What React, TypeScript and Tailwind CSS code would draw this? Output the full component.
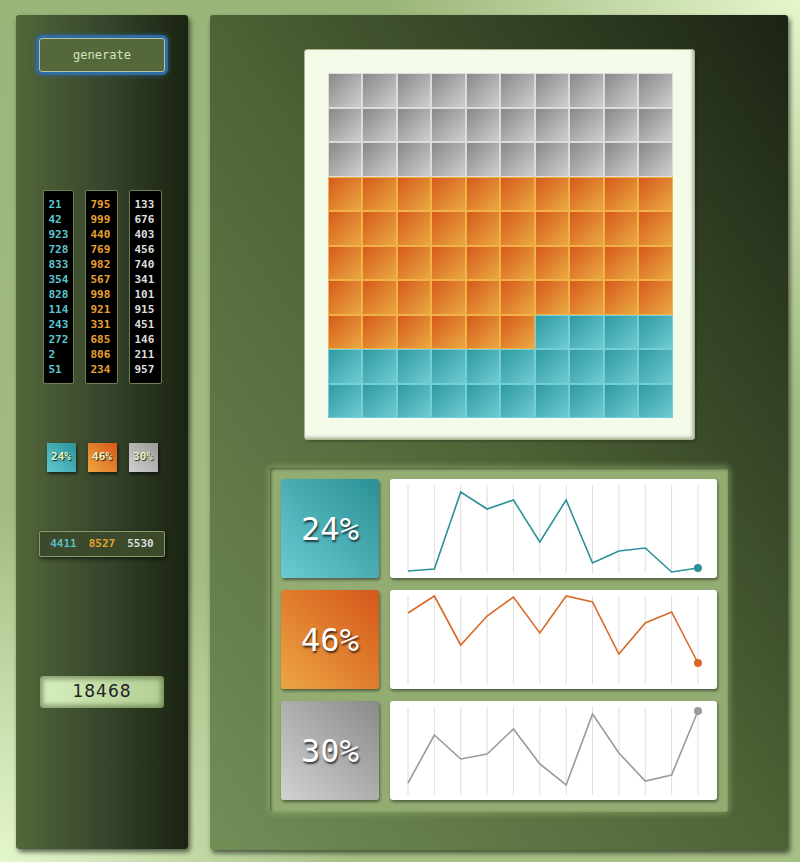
import React from "react";

const col1 = [21, 42, 923, 728, 833, 354, 828, 114, 243, 272, 2, 51];
const col2 = [795, 999, 440, 769, 982, 567, 998, 921, 331, 685, 806, 234];
const col3 = [133, 676, 403, 456, 740, 341, 101, 915, 451, 146, 211, 957];

const charts = [
  {
    pct: "24%",
    tile: "bg-[linear-gradient(to_bottom_left,#2a8f96,#6ccbd2)]",
    stroke: "#2b9199",
    ys: [92, 90, 13, 30, 21, 63, 21, 84, 72, 69, 93, 89],
  },
  {
    pct: "46%",
    tile: "bg-[linear-gradient(to_bottom_left,#d5561a,#eca543)]",
    stroke: "#d9692a",
    ys: [23, 6, 55, 26, 7, 43, 6, 12, 64, 33, 22, 73],
  },
  {
    pct: "30%",
    tile: "bg-[linear-gradient(to_bottom_left,#8a8a8a,#d2d2d2)]",
    stroke: "#9a9a9a",
    ys: [82, 34, 58, 53, 28, 63, 84, 13, 52, 80, 74, 10],
  },
];

const mono = "font-['DejaVu_Sans_Mono',monospace]";

function Cell({ kind }: { kind: "gray" | "orange" | "teal" }) {
  const cls =
    kind === "gray"
      ? "bg-[linear-gradient(to_bottom_right,#888888,#cfcfcf)] border-[#dcdcdc]"
      : kind === "orange"
      ? "bg-[linear-gradient(to_bottom_right,#d65a1c,#eaa942)] border-[#f2b246]"
      : "bg-[linear-gradient(to_bottom_right,#2f9aa2,#6fcbd3)] border-[#74d0d6]";
  return <div className={`border ${cls}`} />;
}

function Chart({ ys, stroke }: { ys: number[]; stroke: string }) {
  const xs = ys.map((_, i) => 18 + i * 26.36);
  const pts = ys.map((y, i) => `${xs[i]},${y}`).join(" ");
  const last = ys.length - 1;
  return (
    <div className="w-[327px] h-[99px] bg-white rounded-[3px] shadow-[1px_2px_3px_rgba(0,0,0,0.45)]">
      <svg width="327" height="99">
        {xs.map((x, i) => (
          <line key={i} x1={x} y1={6} x2={x} y2={94} stroke="#dddddd" strokeWidth={1} />
        ))}
        <polyline points={pts} fill="none" stroke={stroke} strokeWidth={1.6} />
        <circle cx={xs[last]} cy={ys[last]} r={4} fill={stroke} />
      </svg>
    </div>
  );
}

export default function App() {
  const cells: ("gray" | "orange" | "teal")[] = [];
  for (let i = 0; i < 100; i++) {
    cells.push(i < 30 ? "gray" : i < 76 ? "orange" : "teal");
  }

  return (
    <div className="w-[800px] h-[862px] overflow-hidden flex gap-[22px] pl-4 pt-[15px] bg-[radial-gradient(circle_at_100%_0%,#e6f6cc_0%,transparent_35%),radial-gradient(circle_at_0%_100%,#e4f6cc_0%,transparent_30%),linear-gradient(to_bottom,#9ab579,#a6bf85)]">
      {/* sidebar */}
      <div className="w-[172px] h-[834px] rounded-[3px] flex flex-col items-center bg-[linear-gradient(to_right,#53673a,#34432a_55%,#1a2210)] shadow-[2px_3px_5px_rgba(0,0,0,0.6)]">
        <button className={`mt-[23px] w-[126px] h-[34px] rounded-[3px] border border-[#b8c2a8] bg-[#54683b] text-[#d4e4bc] text-[12px] ${mono} shadow-[0_0_0_3px_#2f6ca4,0_0_4px_4px_rgba(47,108,164,0.5)]`}>
          generate
        </button>

        <div className={`mt-[118px] flex gap-[11px] ${mono} text-[11px] font-bold leading-[15px]`}>
          {[
            { d: col1, c: "text-[#5cc6cf]", w: "w-[31px]" },
            { d: col2, c: "text-[#e9a131]", w: "w-[33px]" },
            { d: col3, c: "text-[#dedede]", w: "w-[33px]" },
          ].map((c, i) => (
            <div key={i} className={`${c.w} h-[194px] bg-black border border-[#6e8052] rounded-[2px] pt-[6px] pl-[5px] ${c.c}`}>
              {c.d.map((n, j) => (
                <div key={j}>{n}</div>
              ))}
            </div>
          ))}
        </div>

        <div className={`mt-[59px] flex gap-[12px] ${mono} text-[11px] font-bold text-[#e4f4c4] [text-shadow:1px_1px_1px_rgba(0,0,0,0.8)]`}>
          <div className="w-[29px] h-[29px] flex items-center justify-center bg-[linear-gradient(to_bottom_left,#2c9199,#62c8d0)] shadow-[1px_2px_3px_rgba(0,0,0,0.6)]">24%</div>
          <div className="w-[29px] h-[29px] flex items-center justify-center bg-[linear-gradient(to_bottom_left,#d6581a,#eea640)] shadow-[1px_2px_3px_rgba(0,0,0,0.6)]">46%</div>
          <div className="w-[29px] h-[29px] flex items-center justify-center bg-[linear-gradient(to_bottom_left,#9a9a9a,#d0d0d0)] shadow-[1px_2px_3px_rgba(0,0,0,0.6)]">30%</div>
        </div>

        <div className={`mt-[59px] w-[126px] h-[26px] flex items-center justify-center gap-[12px] border border-[#8a9c6c] rounded-[2px] bg-[#3b4a2a] shadow-[1px_2px_4px_rgba(0,0,0,0.6)] ${mono} text-[11px] font-bold`}>
          <span className="text-[#5cbcc6]">4411</span>
          <span className="text-[#e2a232]">8527</span>
          <span className="text-[#dcdcdc]">5530</span>
        </div>

        <div className="mt-[119px] w-[124px] h-[32px] rounded-[4px] flex items-center justify-center bg-[linear-gradient(to_right,#d6efbe,#b2cd92)] shadow-[inset_0_0_5px_3px_rgba(70,90,45,0.55)] text-[17px] tracking-[1px] text-[#222] font-['DejaVu_Sans',sans-serif]">
          18468
        </div>
      </div>

      {/* main panel */}
      <div className="w-[578px] h-[835px] rounded-[3px] flex flex-col items-center bg-[linear-gradient(to_top_right,#728e57,#4d6236_50%,#1b2313)] shadow-[2px_3px_5px_rgba(0,0,0,0.6)]">
        <div className="mt-[34px] w-[391px] h-[391px] p-[23px] rounded-[3px] border border-[#a6b888] bg-[#f4fce9] shadow-[inset_-2px_-2px_3px_rgba(0,0,0,0.25),2px_2px_2px_rgba(0,0,0,0.2)]">
          <div className="w-[345px] h-[345px] grid grid-cols-10 grid-rows-10">
            {cells.map((k, i) => (
              <Cell key={i} kind={k} />
            ))}
          </div>
        </div>

        <div className="mt-[28px] w-[458px] h-[344px] p-[11px] flex flex-col gap-[12px] rounded-[3px] bg-[#92ac72] shadow-[inset_1px_1px_3px_rgba(0,0,0,0.55),0_0_6px_2px_rgba(160,190,120,0.5)]">
          {charts.map((c, i) => (
            <div key={i} className="flex gap-[11px]">
              <div className={`w-[98px] h-[99px] rounded-[3px] flex items-center justify-center ${c.tile} shadow-[1px_2px_3px_rgba(0,0,0,0.45)] text-white text-[32px] ${mono} [text-shadow:1px_2px_2px_rgba(0,0,0,0.7)]`}>
                {c.pct}
              </div>
              <Chart ys={c.ys} stroke={c.stroke} />
            </div>
          ))}
        </div>
      </div>
    </div>
  );
}
